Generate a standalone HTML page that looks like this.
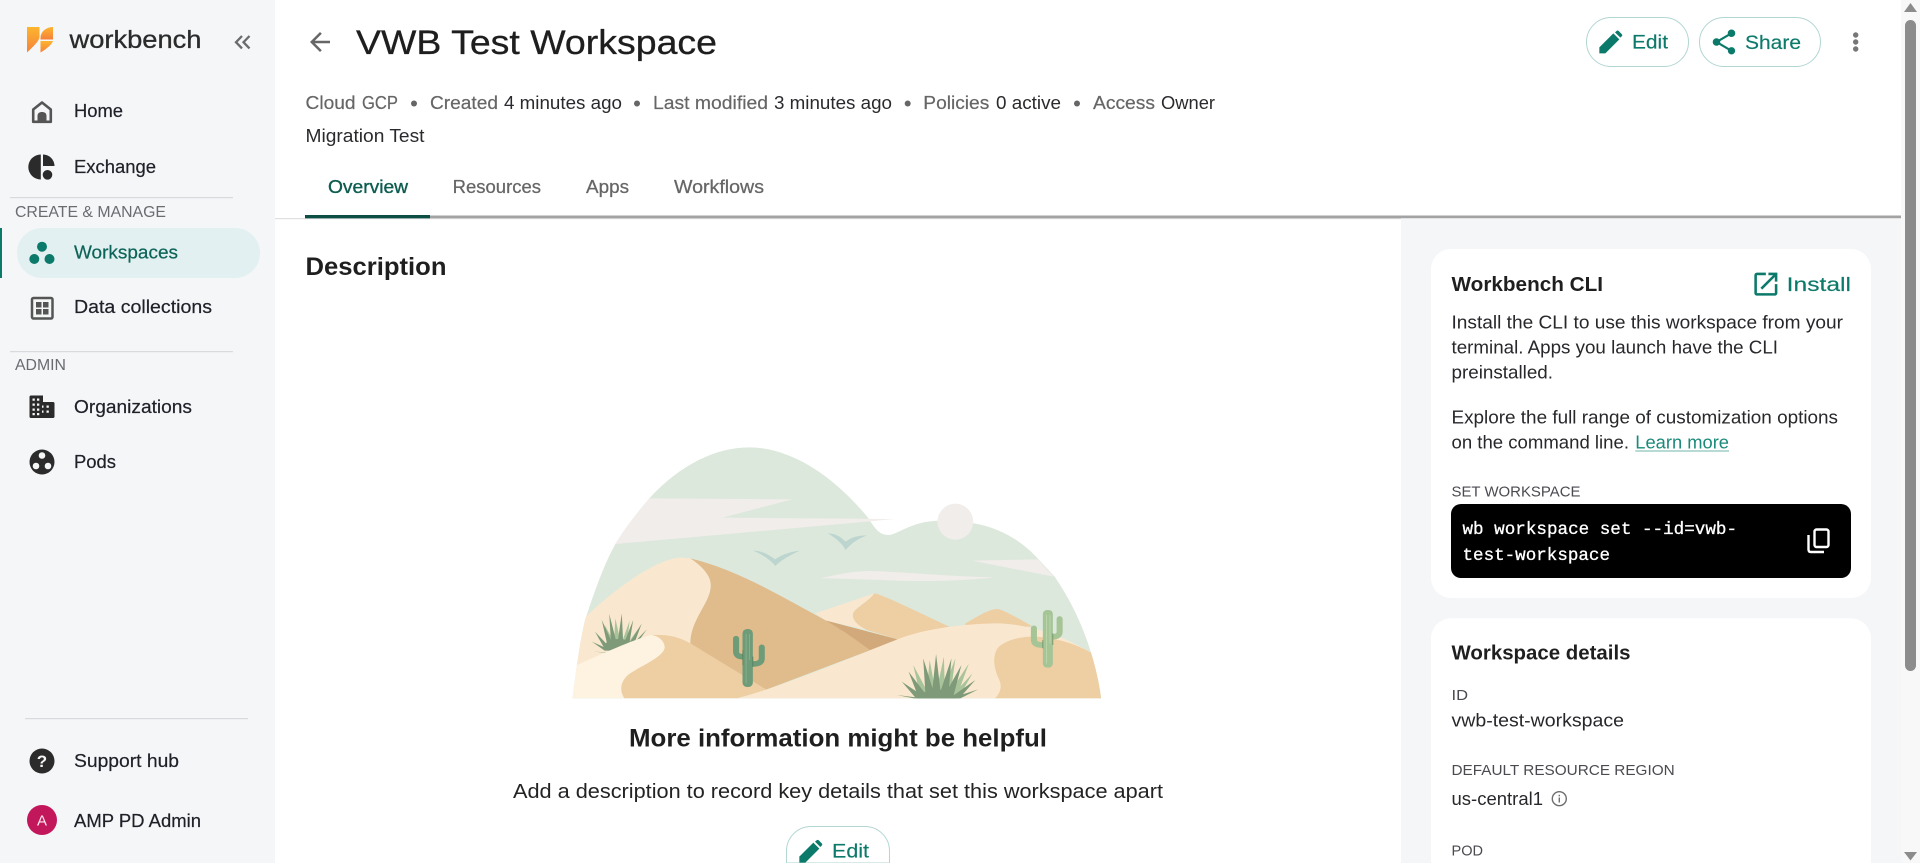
<!DOCTYPE html>
<html lang="en">
<head>
<meta charset="utf-8">
<title>VWB Test Workspace</title>
<style>
html,body{margin:0;padding:0;background:#fff;overflow:hidden;width:1920px;height:863px}
svg{display:block}
text{font-family:"Liberation Sans",Arial,sans-serif;white-space:pre}
.nav{font-size:18px}
.meta{font-size:18px}
.tab{font-size:18px}
.body{font-size:18px}
.cap{font-size:15px}
.mono{font-family:"Liberation Mono",monospace;font-size:17.5px}
</style>
</head>
<body>
<svg width="1920" height="863" viewBox="0 0 1920 863" xmlns="http://www.w3.org/2000/svg">
<defs>
<linearGradient id="lg" x1="0" y1="0" x2="0" y2="1"><stop offset="0" stop-color="#fdb52e"/><stop offset="1" stop-color="#f5813a"/></linearGradient>
<clipPath id="ill"><path d="M35 805C45 720 55 640 70 570C95 490 120 410 155 342C185 290 215 250 250 205C340 100 440 52 530 52C640 52 760 130 860 260C880 290 890 315 920 315C945 315 980 275 1060 272L1160 280C1240 295 1300 340 1340 388L1385 440C1430 510 1465 590 1487 668C1500 715 1510 760 1515 805Z"/></clipPath>
</defs>
<rect width="1920" height="863" fill="#fff"/>

<!-- sidebar -->
<rect width="275" height="863" fill="#f4f6f8"/>
<path d="M27 27H39.500V36C39.500 40 37 43 27 52.500Z" fill="url(#lg)"/>
<path d="M53 27V39.500H40.500V38C40.500 32 46 27 53 27Z" fill="url(#lg)"/>
<path d="M40.500 41H53C52 44 48 48 40.500 52.500Z" fill="url(#lg)"/>
<text x="69.500" y="48" font-size="25" textLength="132" lengthAdjust="spacingAndGlyphs" fill="#2b2b2b" stroke="#2b2b2b" stroke-width=".3">workbench</text>
<path d="M242 36L236 42.200L242 48.400M249.500 36L243.500 42.200L249.500 48.400" fill="none" stroke="#6b6b6b" stroke-width="2.300"/>

<g fill="#1f2028" stroke="#1f2028" stroke-width=".2">
<text class="nav" x="74" y="117" textLength="49" lengthAdjust="spacingAndGlyphs">Home</text>
<text class="nav" x="74" y="173" textLength="82" lengthAdjust="spacingAndGlyphs">Exchange</text>
<text class="nav" x="74" y="313" textLength="138" lengthAdjust="spacingAndGlyphs">Data collections</text>
<text class="nav" x="74" y="413" textLength="118" lengthAdjust="spacingAndGlyphs">Organizations</text>
<text class="nav" x="74" y="468" textLength="42" lengthAdjust="spacingAndGlyphs">Pods</text>
<text class="nav" x="74" y="767" textLength="105" lengthAdjust="spacingAndGlyphs">Support hub</text>
<text class="nav" x="74" y="827" textLength="127" lengthAdjust="spacingAndGlyphs">AMP PD Admin</text>
</g>
<rect x="10" y="197" width="223" height="1.200" fill="#d9dade"/>
<text x="15" y="217" font-size="15.500" textLength="151" lengthAdjust="spacingAndGlyphs" fill="#6b6b70">CREATE &amp; MANAGE</text>
<rect x="17" y="228" width="243" height="50" rx="25" fill="#e2f0f1"/>
<rect x="0" y="228" width="2" height="50" fill="#0c7a6a"/>
<text class="nav" x="74" y="258.500" textLength="104" lengthAdjust="spacingAndGlyphs" fill="#0c6458" stroke="#0c6458" stroke-width=".2">Workspaces</text>
<rect x="10" y="351" width="223" height="1.200" fill="#d9dade"/>
<text x="15" y="370" font-size="15.500" textLength="51" lengthAdjust="spacingAndGlyphs" fill="#6b6b70">ADMIN</text>
<rect x="25" y="718" width="223" height="1.200" fill="#d9dade"/>

<!-- nav icons -->
<path d="M42 102.500L33.200 109.500V121.800H50.800V109.500Z" fill="none" stroke="#555" stroke-width="2.600" stroke-linejoin="round"/>
<path d="M37.500 122V116C37.500 113 39.500 112 42 112S46.500 113 46.500 116V122Z" fill="#555"/>
<path d="M40.800 154.500A12.500 12.500 0 0 0 40.800 179.500Z" fill="#2b2b2b"/>
<path d="M43 154.500A11.500 11.500 0 0 1 54.500 166H43Z" fill="#2b2b2b"/>
<circle cx="47.500" cy="174.800" r="4.800" fill="#2b2b2b"/>
<circle cx="42" cy="246.700" r="5" fill="#0c7a6a"/><circle cx="34.300" cy="259" r="5" fill="#0c7a6a"/><circle cx="49.500" cy="259" r="5" fill="#0c7a6a"/>
<rect x="32" y="298" width="20.500" height="20.500" rx="1.500" fill="none" stroke="#555" stroke-width="2.500"/>
<path d="M36 302h5.500v5.500h-5.500zM43 302h5.500v5.500h-5.500zM36 309h5.500v5.500h-5.500zM43 309h5.500v5.500h-5.500z" fill="#555"/>
<path d="M31 395.500H43V402H53A1.500 1.500 0 0 1 54.500 403.500V416.500A1.500 1.500 0 0 1 53 418H31A1.500 1.500 0 0 1 29.500 416.500V397A1.500 1.500 0 0 1 31 395.500Z" fill="#2b2b2b"/>
<path d="M32.500 398.500h2.300v2.300h-2.300zM37 398.500h2.300v2.300h-2.300zM32.500 403.500h2.300v2.300h-2.300zM37 403.500h2.300v2.300h-2.300zM32.500 408.500h2.300v2.300h-2.300zM37 408.500h2.300v2.300h-2.300zM32.500 413h2.300v2.300h-2.300zM37 413h2.300v2.300h-2.300zM46.500 405.500h2.300v2.300h-2.300zM46.500 410.500h2.300v2.300h-2.300zM42 405.500h1.500v2.300h-1.500zM42 410.500h1.500v2.300h-1.500z" fill="#f4f6f8"/>
<circle cx="42" cy="462" r="12.500" fill="#2b2b2b"/>
<circle cx="42" cy="455.500" r="3.300" fill="#f4f6f8"/><circle cx="36" cy="466" r="3.300" fill="#f4f6f8"/><circle cx="48" cy="466" r="3.300" fill="#f4f6f8"/>
<circle cx="42" cy="761" r="12.500" fill="#2b2b2b"/>
<text x="42" y="767" font-size="17" font-weight="700" text-anchor="middle" fill="#f4f6f8">?</text>
<circle cx="42" cy="820" r="15" fill="#c2185b"/>
<text x="42" y="825.500" font-size="15" text-anchor="middle" fill="#fde8f0">A</text>

<!-- header -->
<path transform="translate(305 27) scale(1.25)" d="M20 11H7.830l5.590-5.590L12 4l-8 8 8 8 1.410-1.410L7.830 13H20v-2z" fill="#666"/>
<text x="356" y="54" font-size="34" textLength="361" lengthAdjust="spacingAndGlyphs" fill="#1e1e1e" stroke="#1e1e1e" stroke-width=".3">VWB Test Workspace</text>

<g fill="#666" stroke="#666" stroke-width=".2">
<text class="meta" x="305.500" y="109" textLength="50" lengthAdjust="spacingAndGlyphs">Cloud</text>
<text class="meta" x="362" y="109" textLength="36" lengthAdjust="spacingAndGlyphs">GCP</text>
<text class="meta" x="430" y="109" textLength="68" lengthAdjust="spacingAndGlyphs">Created</text>
<text class="meta" x="653" y="109" textLength="115" lengthAdjust="spacingAndGlyphs">Last modified</text>
<text class="meta" x="923.300" y="109" textLength="66" lengthAdjust="spacingAndGlyphs">Policies</text>
<text class="meta" x="1093" y="109" textLength="62" lengthAdjust="spacingAndGlyphs">Access</text>
</g>
<g fill="#2a2a2e">
<text class="meta" x="504" y="109" textLength="118" lengthAdjust="spacingAndGlyphs">4 minutes ago</text>
<text class="meta" x="774" y="109" textLength="118" lengthAdjust="spacingAndGlyphs">3 minutes ago</text>
<text class="meta" x="996" y="109" textLength="65" lengthAdjust="spacingAndGlyphs">0 active</text>
<text class="meta" x="1161" y="109" textLength="54" lengthAdjust="spacingAndGlyphs">Owner</text>
<text class="meta" x="305.500" y="142" textLength="119" lengthAdjust="spacingAndGlyphs">Migration Test</text>
</g>
<g fill="#666"><circle cx="414" cy="103.500" r="3"/><circle cx="637" cy="103.500" r="3"/><circle cx="907.700" cy="103.500" r="3"/><circle cx="1077" cy="103.500" r="3"/></g>

<text class="tab" x="328" y="193" textLength="80" lengthAdjust="spacingAndGlyphs" fill="#0d5c50" stroke="#0d5c50" stroke-width=".35">Overview</text>
<g fill="#666" stroke="#666" stroke-width=".25">
<text class="tab" x="452.700" y="193" textLength="88.300" lengthAdjust="spacingAndGlyphs">Resources</text>
<text class="tab" x="586" y="193" textLength="43" lengthAdjust="spacingAndGlyphs">Apps</text>
<text class="tab" x="674" y="193" textLength="90" lengthAdjust="spacingAndGlyphs">Workflows</text>
</g>

<rect x="275" y="218" width="1126" height="1.200" fill="#e0e0e0"/>
<rect x="305" y="215.500" width="1596" height="2.800" fill="#a3a3a3"/>
<rect x="305" y="215" width="125" height="3.300" fill="#0d4f45"/>

<!-- header buttons -->
<rect x="1586.500" y="17.500" width="102" height="49" rx="24.500" fill="#fff" stroke="#b2d6d2"/>
<g transform="translate(1560 0) scale(.33333)" fill="#0c7a6a">
<path d="M118 142L160 100L178 118L136 160H118Z"/>
<path d="M165 97L171 92Q174 91 176 93L186 103Q188 106 186 108L181 113Z"/>
</g>
<text x="1632" y="48.700" font-size="19.500" textLength="36" lengthAdjust="spacingAndGlyphs" fill="#0c7a6a" stroke="#0c7a6a" stroke-width=".15">Edit</text>
<rect x="1699.500" y="17.500" width="121" height="49" rx="24.500" fill="#fff" stroke="#b2d6d2"/>
<path transform="translate(1709 27) scale(1.25)" d="M18 16.080c-.76 0-1.440.3-1.960.77L8.910 12.700c.05-.23.09-.46.09-.7s-.04-.47-.09-.7l7.050-4.110c.54.5 1.250.81 2.040.81 1.660 0 3-1.340 3-3s-1.340-3-3-3-3 1.340-3 3c0 .24.04.47.09.7L8.040 9.810C7.500 9.310 6.790 9 6 9c-1.660 0-3 1.340-3 3s1.340 3 3 3c.79 0 1.500-.31 2.040-.81l7.120 4.160c-.05.21-.08.43-.08.65 0 1.610 1.310 2.920 2.920 2.920s2.920-1.310 2.920-2.920-1.310-2.920-2.920-2.920z" fill="#0c7a6a"/>
<text x="1745" y="49" font-size="19.500" textLength="56" lengthAdjust="spacingAndGlyphs" fill="#0c7a6a" stroke="#0c7a6a" stroke-width=".15">Share</text>
<g fill="#777"><circle cx="1855.700" cy="35" r="2.700"/><circle cx="1855.700" cy="42" r="2.700"/><circle cx="1855.700" cy="49" r="2.700"/></g>

<!-- main -->
<text x="305.500" y="275" font-size="25" font-weight="700" textLength="141" lengthAdjust="spacingAndGlyphs" fill="#1f1f1f">Description</text>

<!-- illustration -->
<g transform="translate(560 430) scale(.35714 .33333)">
<path d="M35 805C45 720 55 640 70 570C95 490 120 410 155 342C185 290 215 250 250 205C340 100 440 52 530 52C640 52 760 130 860 260C880 290 890 315 920 315C945 315 980 275 1060 272L1160 280C1240 295 1300 340 1340 388L1385 440C1430 510 1465 590 1487 668C1500 715 1510 760 1515 805Z" fill="#dde8dc"/>
<path d="M250 205L650 208L455 263L935 267L860 275L155 342C185 290 215 250 250 205Z" fill="#f1edea"/>
<path d="M1155 392L1338 388L1382 440Z" fill="#f1edea"/>
<path d="M730 445C790 430 830 423 870 423C950 425 1100 440 1215 442C1100 455 1000 455 900 450C840 448 780 445 730 445Z" fill="#f1edea"/>
<ellipse cx="1107" cy="275" rx="50" ry="54" fill="#f1edea"/>
<path d="M540 362C570 362 590 380 602 388C620 375 645 365 672 362C645 375 620 390 603 408C590 390 565 372 540 362Z" fill="#bcd5cf"/>
<path d="M750 310C775 310 790 325 800 335C815 322 835 316 860 316C835 325 815 340 800 360C790 340 770 322 750 310Z" fill="#bcd5cf"/>
<g clip-path="url(#ill)">
<path d="M715 550L880 490C860 520 820 535 820 555C820 575 840 590 860 600L745 572Z" fill="#f9e8cf"/>
<path d="M880 490C900 492 1000 545 1090 590L945 628L860 600C840 590 820 575 820 555C820 535 860 520 880 490Z" fill="#eecea3"/>
<path d="M1135 580C1170 560 1200 537 1225 537C1245 540 1290 570 1325 590L1135 590Z" fill="#eecea3"/>
<path d="M0 640C80 540 250 385 340 383L365 385C400 410 425 440 422 470C420 520 365 570 365 640L300 720L0 740Z" fill="#f9e8cf"/>
<path d="M365 385C500 420 620 500 745 572L945 628L870 660L575 780L365 640C365 570 420 520 422 470C425 440 400 410 365 385Z" fill="#e0bb8c"/>
<path d="M745 572L945 628L868 660C830 630 790 600 745 572Z" fill="#d2a97a"/>
<!-- left agave -->
<path d="M130 662L105 620L150 662M140 662L125 585L165 662M150 662L155 565L175 662M165 662L195 572L185 662M175 662L220 595L195 662" fill="#a9c39a"/>
<path d="M125 662L89 635L145 662M126 668L93 665L146 668M128 662L98 605L148 662M136 662L117 570L156 662M144 662L138 552L164 662M158 662L173 550L178 662M171 662L205 570L191 662M181 662L229 580L201 660M186 662L243 598L206 655" fill="#7e9a78"/>
<ellipse cx="165" cy="645" rx="38" ry="18" fill="#7e9a78"/>
<path d="M255 615C310 612 340 625 365 640L580 780L495 805L180 805C165 780 170 755 190 735C220 710 295 680 293 650C290 630 275 618 255 615Z" fill="#eecea3"/>
<path d="M0 728C100 680 200 630 255 615C275 618 290 630 293 650C295 680 220 710 190 735C170 755 165 780 180 805L0 805Z" fill="#fef3e1"/>
<path d="M495 805C620 770 800 690 945 628C1020 595 1140 580 1230 580C1330 585 1420 625 1487 668L1530 805Z" fill="#f9e8cf"/>
<path d="M1487 668L1530 805L1218 805C1240 780 1235 760 1228 745C1215 715 1210 680 1225 655C1245 630 1290 620 1320 620C1380 620 1440 640 1487 668Z" fill="#eecea3"/>
</g>
<!-- left cactus -->
<g fill="none" stroke="#6f9c78" stroke-width="17" stroke-linecap="round" stroke-linejoin="round">
<path d="M493 626V665Q493 680 512 680"/>
<path d="M565 652V685Q565 702 540 702"/>
</g>
<rect x="511" y="597" width="29" height="174" rx="13" fill="#6f9c78"/>
<path d="M521 612V760M531 612V690" stroke="#8fb595" stroke-width="2" fill="none"/>
<path d="M512 660V706M540 680V710" stroke="#4f7a5b" stroke-width="2" fill="none"/>
<!-- right cactus -->
<g fill="none" stroke="#a6c597" stroke-width="17" stroke-linecap="round" stroke-linejoin="round">
<path d="M1327 595V630Q1327 645 1352 645"/>
<path d="M1399 567V605Q1399 620 1380 620"/>
</g>
<rect x="1352" y="540" width="28" height="173" rx="12" fill="#a6c597"/>
<path d="M1362 555V700M1372 555V640" stroke="#c2dab2" stroke-width="2" fill="none"/>
<path d="M1352 630V655M1380 610V645" stroke="#66875f" stroke-width="2" fill="none"/>
<!-- front agave -->
<path d="M1003 805L970 765L1031 805M1011 805L989 705L1039 805M1025 805L1035 690L1055 805M1050 805L1075 680L1078 805M1064 805L1107 685L1092 805M1081 805L1145 700L1109 805M1090 805L1155 730L1115 805" fill="#a9c39a"/>
<path d="M991 805L943 795L1019 805M997 805L957 755L1025 805M1005 805L976 725L1033 805M1024 805L1017 685L1052 805M1040 805L1053 672L1068 805M1059 805L1096 685L1087 805M1072 805L1124 705L1100 805M1090 805L1163 750L1118 805M1093 805L1171 778L1121 805" fill="#7e9a78"/>
<path d="M1000 805C1020 770 1090 770 1110 805Z" fill="#7e9a78"/>
</g>

<text x="629" y="746.700" font-size="25" font-weight="700" textLength="418" lengthAdjust="spacingAndGlyphs" fill="#1f1f1f">More information might be helpful</text>
<text x="513" y="798" font-size="20" textLength="650" lengthAdjust="spacingAndGlyphs" fill="#232326">Add a description to record key details that set this workspace apart</text>
<path d="M786.500 863V851A24.500 24.500 0 0 1 811 826.500H865A24.500 24.500 0 0 1 889.500 851V863Z" fill="#fff" stroke="#b2d6d2"/>
<g transform="translate(760 809.300) scale(.33333)" fill="#0c7a6a">
<path d="M118 142L160 100L178 118L136 160H118Z"/>
<path d="M165 97L171 92Q174 91 176 93L186 103Q188 106 186 108L181 113Z"/>
</g>
<text x="832" y="857.500" font-size="19.500" textLength="37" lengthAdjust="spacingAndGlyphs" fill="#0c7a6a" stroke="#0c7a6a" stroke-width=".15">Edit</text>

<!-- right panel -->
<rect x="1401" y="219" width="500" height="644" fill="#f4f6f8"/>
<rect x="1431" y="249" width="440" height="349" rx="20" fill="#fff"/>
<text x="1451.500" y="291" font-size="20" font-weight="700" textLength="151.500" lengthAdjust="spacingAndGlyphs" fill="#1f1f1f">Workbench CLI</text>
<path transform="translate(1750.500 268.800) scale(1.28)" d="M19 19H5V5h7V3H5a2 2 0 0 0-2 2v14a2 2 0 0 0 2 2h14c1.100 0 2-.9 2-2v-7h-2v7zM14 3v2h3.590l-9.830 9.830 1.410 1.410L19 6.410V10h2V3h-7z" fill="#0c7a6a"/>
<text x="1786.700" y="291" font-size="19.500" textLength="64.300" lengthAdjust="spacingAndGlyphs" fill="#0c7a6a" stroke="#0c7a6a" stroke-width=".15">Install</text>
<g fill="#28282c">
<text class="body" x="1451.500" y="328.300" textLength="391.500" lengthAdjust="spacingAndGlyphs">Install the CLI to use this workspace from your</text>
<text class="body" x="1451.500" y="353.300" textLength="326.500" lengthAdjust="spacingAndGlyphs">terminal. Apps you launch have the CLI</text>
<text class="body" x="1451.500" y="378.300" textLength="101.500" lengthAdjust="spacingAndGlyphs">preinstalled.</text>
<text class="body" x="1451.500" y="423.300" textLength="386.500" lengthAdjust="spacingAndGlyphs">Explore the full range of customization options</text>
<text class="body" x="1451.500" y="448.300" textLength="177.500" lengthAdjust="spacingAndGlyphs">on the command line.</text>
</g>
<text class="body" x="1635.300" y="448.300" textLength="93.700" lengthAdjust="spacingAndGlyphs" fill="#1a8a7a">Learn more</text>
<rect x="1635.300" y="450.500" width="93.700" height="1" fill="#6fb5aa"/>
<text class="cap" x="1451.500" y="496.700" textLength="129" lengthAdjust="spacingAndGlyphs" fill="#4a4a50">SET WORKSPACE</text>
<rect x="1451" y="504" width="400" height="74" rx="10" fill="#000"/>
<g fill="#fff" stroke="#fff" stroke-width=".3">
<text class="mono" x="1462.500" y="534" textLength="274.500" lengthAdjust="spacingAndGlyphs">wb workspace set --id=vwb-</text>
<text class="mono" x="1462.500" y="560" textLength="147.500" lengthAdjust="spacingAndGlyphs">test-workspace</text>
</g>
<rect x="1814.500" y="529.500" width="14" height="17.500" rx="2" fill="none" stroke="#fff" stroke-width="2.400"/>
<path d="M1808.500 535V549.500Q1808.500 552 1811 552H1824" fill="none" stroke="#fff" stroke-width="2.400"/>

<path d="M1431 863V638.300A20 20 0 0 1 1451 618.300H1851A20 20 0 0 1 1871 638.300V863Z" fill="#fff"/>
<text x="1451.500" y="659.300" font-size="20" font-weight="700" textLength="179" lengthAdjust="spacingAndGlyphs" fill="#1f1f1f">Workspace details</text>
<text class="cap" x="1451.500" y="700" textLength="16.500" lengthAdjust="spacingAndGlyphs" fill="#4a4a50">ID</text>
<text class="body" x="1451.500" y="726.700" textLength="172.500" lengthAdjust="spacingAndGlyphs" fill="#28282c">vwb-test-workspace</text>
<text class="cap" x="1451.500" y="775" textLength="223.200" lengthAdjust="spacingAndGlyphs" fill="#4a4a50">DEFAULT RESOURCE REGION</text>
<text class="body" x="1451.500" y="805" textLength="91.500" lengthAdjust="spacingAndGlyphs" fill="#28282c">us-central1</text>
<circle cx="1559.300" cy="798.700" r="7" fill="none" stroke="#6e6e6e" stroke-width="1.400"/>
<rect x="1558.600" y="797.500" width="1.400" height="5" fill="#6e6e6e"/><rect x="1558.600" y="794.800" width="1.400" height="1.500" fill="#6e6e6e"/>
<text class="cap" x="1451.500" y="855.700" textLength="31.500" lengthAdjust="spacingAndGlyphs" fill="#4a4a50">POD</text>

<!-- scrollbar -->
<rect x="1901" width="19" height="863" fill="#f8f8f8"/>
<rect x="1905" y="20" width="11" height="651" rx="5.500" fill="#8c8c8c"/>
<path d="M1910.500 3L1917 12H1904Z" fill="#8c8c8c"/>
<path d="M1904 852H1917L1910.500 860.500Z" fill="#8c8c8c"/>
</svg>
</body>
</html>
